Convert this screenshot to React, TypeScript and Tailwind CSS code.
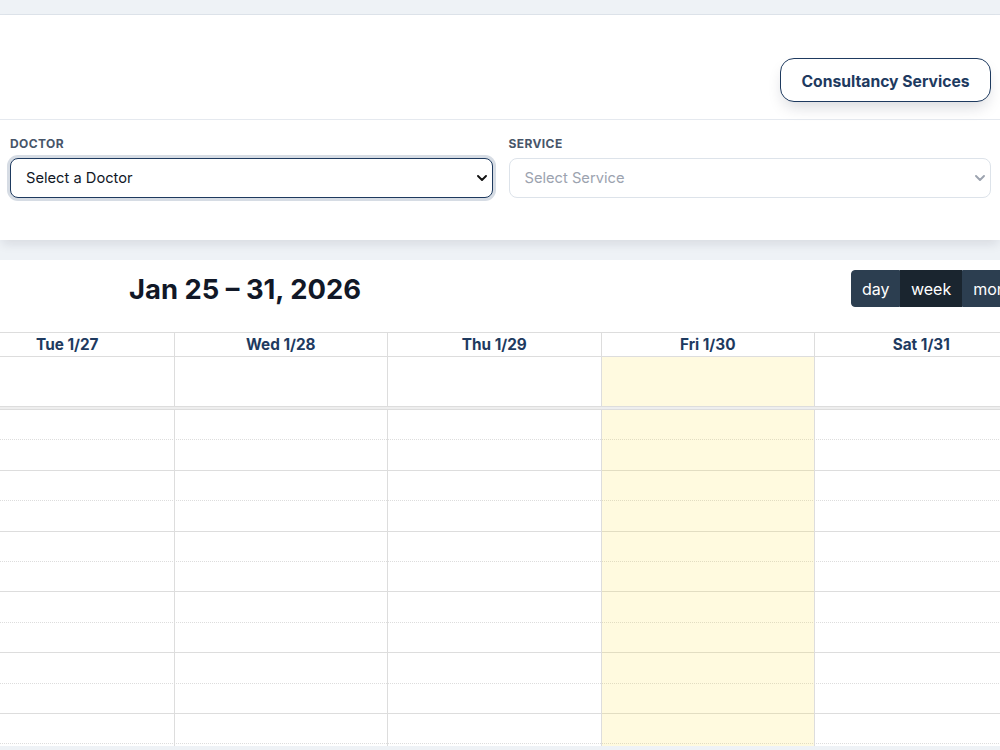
import React from "react";

const days = [
  { label: "Tue 1/27", today: false },
  { label: "Wed 1/28", today: false },
  { label: "Thu 1/29", today: false },
  { label: "Fri 1/30", today: true },
  { label: "Sat 1/31", today: false },
];

const slots = Array.from({ length: 12 }, (_, i) => i);

function Chevron({ color }: { color: string }) {
  return (
    <svg width="10" height="6" viewBox="0 0 10 6" fill="none">
      <path d="M1 1l4 4 4-4" stroke={color} strokeWidth="1.9" strokeLinecap="round" strokeLinejoin="round" />
    </svg>
  );
}

export default function App() {
  return (
    <div className="w-[1000px] h-[750px] overflow-hidden bg-[#eef2f6] font-['Inter',sans-serif]">
      <div className="h-[15px] border-b border-[#dde3ea]" />
      {/* Filter card */}
      <div className="bg-white shadow-[0_6px_10px_-2px_rgba(15,23,42,0.10)]">
        <div className="flex justify-end pt-[43px] pb-[17px] pr-[9px] border-b border-[#e5e9ef]">
          <button className="h-[44px] w-[211px] rounded-[14px] border border-[#1e3a5f] bg-white text-[15.7px] font-bold text-[#1e3a5f] leading-[44px] pt-[1px] shadow-[0_8px_16px_-4px_rgba(15,23,42,0.18)]">
            Consultancy Services
          </button>
        </div>
        <div className="grid grid-cols-2 gap-[16px] pl-[10px] pr-[9px] pt-[17px] pb-[42px]">
          <div className="flex flex-col gap-[7px]">
            <label className="text-[12px] font-bold tracking-[0.4px] text-[#475569] leading-[14px]">DOCTOR</label>
            <div className="relative">
              <select className="appearance-none w-full h-[40px] rounded-[8px] border border-[#1e3a5f] bg-white pl-[15px] text-[14.7px] text-[#111827] ring-[3px] ring-[#d6dce4] outline-none">
                <option>Select a Doctor</option>
              </select>
              <span className="pointer-events-none absolute right-[6px] top-[17px]">
                <Chevron color="#111" />
              </span>
            </div>
          </div>
          <div className="flex flex-col gap-[7px]">
            <label className="text-[12px] font-bold tracking-[0.4px] text-[#475569] leading-[14px]">SERVICE</label>
            <div className="relative">
              <select className="appearance-none w-full h-[40px] rounded-[8px] border border-[#dde3ea] bg-white pl-[15px] text-[14.7px] text-[#9ca3af] outline-none">
                <option>Select Service</option>
              </select>
              <span className="pointer-events-none absolute right-[6px] top-[17px]">
                <Chevron color="#9ca3af" />
              </span>
            </div>
          </div>
        </div>
      </div>

      {/* Calendar card */}
      <div className="mt-[20px] h-[486px] overflow-hidden bg-white">
        <div className="flex items-center justify-between pt-[10px] h-[47px] mb-[25px]">
          <h2 className="ml-[129px] mt-[2px] text-[27.4px] font-bold text-[#111827] leading-[37px] whitespace-nowrap">
            Jan 25 – 31, 2026
          </h2>
          <div className="flex shrink-0 h-[37px] mr-[-32px] text-[16px] text-white">
            <button className="h-full px-[9.5px] bg-[#2c3e50] rounded-l-[4px] border border-[#2c3e50]">day</button>
            <button className="h-full px-[10px] bg-[#1a252f] border border-[#1a252f]">week</button>
            <button className="h-full px-[10px] bg-[#2c3e50] rounded-r-[4px] border border-[#2c3e50]">month</button>
          </div>
        </div>

        <div className="ml-[-39px] w-[1067.5px]">
          {/* header */}
          <div className="flex border-y border-[#ddd] h-[25px]">
            {days.map((d) => (
              <div
                key={d.label}
                className="w-[213.5px] shrink-0 border-r border-[#ddd] text-center text-[15.3px] font-bold text-[#1e3a5f] leading-[23px]"
              >
                {d.label}
              </div>
            ))}
          </div>
          {/* all-day */}
          <div className="flex h-[49px]">
            {days.map((d) => (
              <div
                key={d.label}
                className={`w-[213.5px] shrink-0 border-r border-[#ddd] ${d.today ? "bg-[#fffae0]" : ""}`}
              />
            ))}
          </div>
          {/* divider */}
          <div className="h-[4px] bg-[#eee] border-y border-[#ddd]" />
          {/* slots */}
          <div className="relative">
            <div className="flex flex-col">
              {slots.map((i) => (
                <div
                  key={i}
                  className={`h-[30.4px] border-b border-[#ddd] ${i % 2 === 0 ? "border-dotted" : "border-solid"}`}
                />
              ))}
            </div>
            <div className="absolute inset-0 flex">
              {days.map((d) => (
                <div
                  key={d.label}
                  className={`w-[213.5px] shrink-0 border-r border-[#ddd] ${d.today ? "bg-[rgba(255,220,40,0.15)]" : ""}`}
                />
              ))}
            </div>
          </div>
        </div>
      </div>
    </div>
  );
}
